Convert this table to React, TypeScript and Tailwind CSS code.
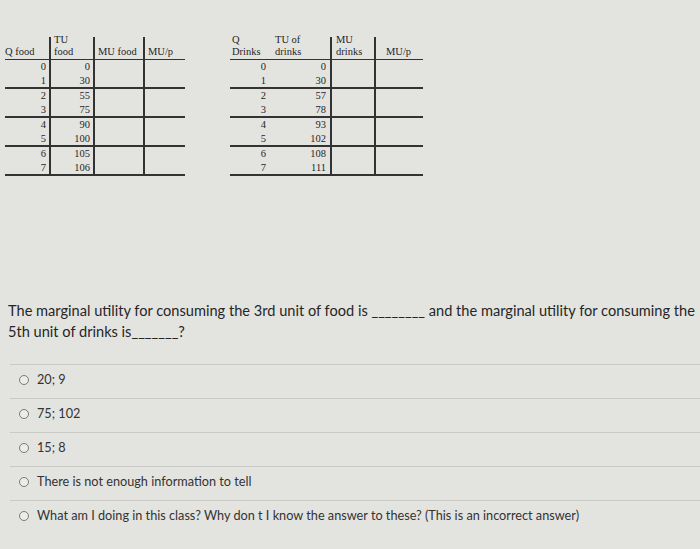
import React from "react";

const serif = { fontFamily: '"Liberation Serif", "DejaVu Serif", serif' };

const foodTU = [0, 30, 55, 75, 90, 100, 105, 106];
const drinkTU = [0, 30, 57, 78, 93, 102, 108, 111];

function FoodTable() {
  const groups = [0, 1, 2, 3];
  return (
    <div className="w-[180px] text-[10.5px] leading-[14px] text-[#262626]" style={serif}>
      <div className="flex h-[23px] border-b-[1.5px] border-[#333]">
        <div className="w-[44px] flex items-end pb-[1px] leading-[12px]">Q food</div>
        <div className="w-[44px] border-l-2 border-[#333] flex flex-col justify-end pl-[3px] pb-[1px] leading-[12px]">
          <span>TU</span>
          <span>food</span>
        </div>
        <div className="w-[50px] border-l-2 border-[#333] flex items-end pl-[3px] pb-[1px] leading-[12px] whitespace-nowrap">MU food</div>
        <div className="w-[42px] border-l-2 border-[#333] flex items-end pl-[3px] pb-[1px] leading-[12px]">MU/p</div>
      </div>
      {groups.map((g) => (
        <div key={g} className="flex h-[29px] border-b-2 border-[#333]">
          <div className="w-[44px] flex flex-col justify-center items-end pr-[3px]">
            <span>{g * 2}</span>
            <span>{g * 2 + 1}</span>
          </div>
          <div className="w-[44px] border-l-2 border-[#333] flex flex-col justify-center items-end pr-[3px]">
            <span>{foodTU[g * 2]}</span>
            <span>{foodTU[g * 2 + 1]}</span>
          </div>
          <div className="w-[50px] border-l-2 border-[#333]" />
          <div className="w-[42px] border-l-2 border-[#333]" />
        </div>
      ))}
    </div>
  );
}

function DrinkTable() {
  const groups = [0, 1, 2, 3];
  return (
    <div className="w-[193px] text-[10.5px] leading-[12px] text-[#262626]" style={serif}>
      <div className="flex h-[23px] border-b-[1.5px] border-[#333]">
        <div className="w-[40px] flex flex-col justify-end pl-[2px] pb-[1px]">
          <span>Q</span>
          <span>Drinks</span>
        </div>
        <div className="w-[60px] flex flex-col justify-end pl-[5px] pb-[1px]">
          <span>TU of</span>
          <span>drinks</span>
        </div>
        <div className="w-[44px] border-l-2 border-[#333] flex flex-col justify-end pl-[4px] pb-[1px]">
          <span>MU</span>
          <span>drinks</span>
        </div>
        <div className="w-[49px] border-l-2 border-[#333] flex items-end pl-[10px] pb-[1px]">MU/p</div>
      </div>
      {groups.map((g) => (
        <div key={g} className="flex h-[29px] border-b-2 border-[#333] leading-[14px]">
          <div className="w-[40px] flex flex-col justify-center items-end pr-[4px]">
            <span>{g * 2}</span>
            <span>{g * 2 + 1}</span>
          </div>
          <div className="w-[60px] flex flex-col justify-center items-end pr-[4px]">
            <span>{drinkTU[g * 2]}</span>
            <span>{drinkTU[g * 2 + 1]}</span>
          </div>
          <div className="w-[44px] border-l-2 border-[#333]" />
          <div className="w-[49px] border-l-2 border-[#333]" />
        </div>
      ))}
    </div>
  );
}

const options = [
  "20; 9",
  "75; 102",
  "15; 8",
  "There is not enough information to tell",
  "What am I doing in this class? Why don t I know the answer to these? (This is an incorrect answer)",
];

export default function App() {
  return (
    <div
      className="w-[700px] h-[549px] overflow-hidden bg-[#e3e4e0] text-[#2a2a2a]"
      style={{ fontFamily: 'Lato, "Open Sans", sans-serif' }}
    >
      <div className="flex pt-[37px] pl-[5px] gap-[45px] h-[300px]">
        <FoodTable />
        <DrinkTable />
      </div>
      <div className="pl-[8px] text-[14.6px] leading-[21px] whitespace-nowrap text-[#262626]">
        <div>The marginal utility for consuming the 3rd unit of food is ________ and the marginal utility for consuming the</div>
        <div>5th unit of drinks is_______?</div>
      </div>
      <div className="mt-[22px] ml-[10px]">
        {options.map((o) => (
          <div key={o} className="flex items-center h-[34px] pb-[3px] border-t border-[#c9cac6] pl-[9px] gap-[8px] text-[12.7px] text-[#333]">
            <span className="w-[10px] h-[10px] rounded-full border border-[#7a7a7a] bg-[#ecedea]" />
            <span>{o}</span>
          </div>
        ))}
      </div>
    </div>
  );
}
